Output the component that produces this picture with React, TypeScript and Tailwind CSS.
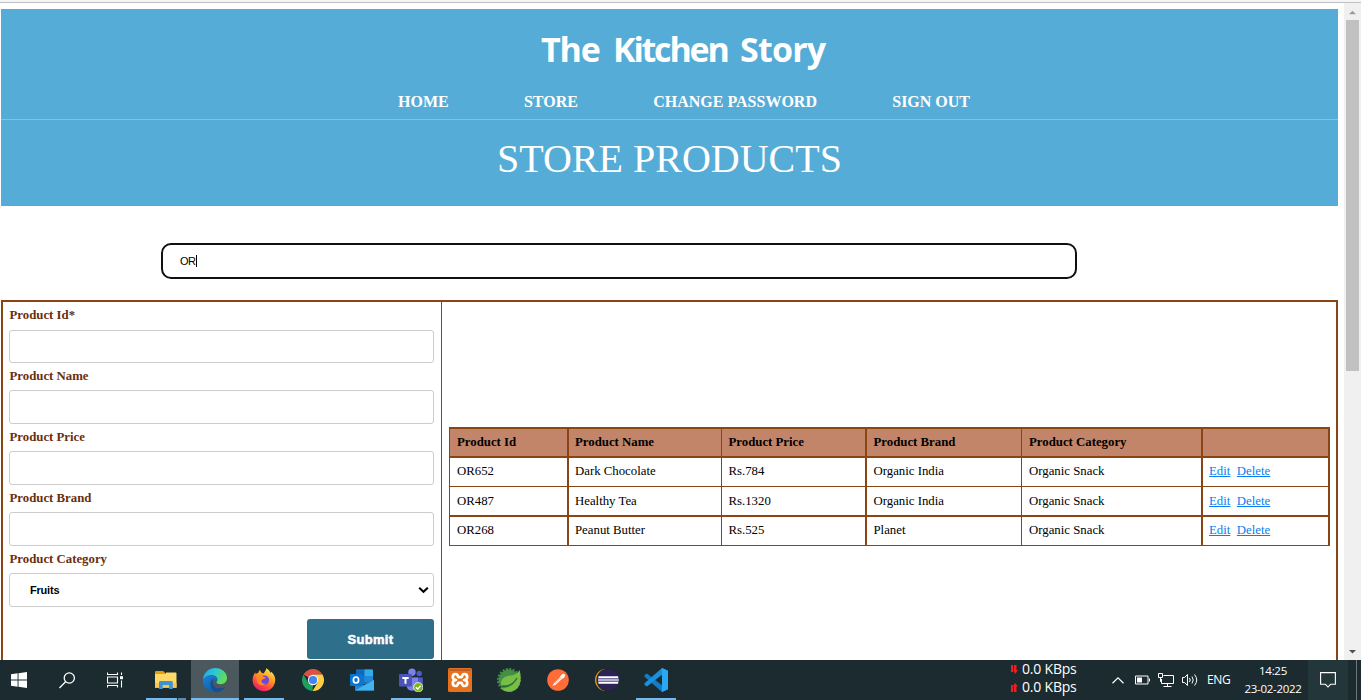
import type { ReactNode } from "react";

const SERIF = "font-['Liberation_Serif',serif]";

function Header() {
  return (
    <header className="h-[197px] w-full bg-[#55acd6] text-white">
      <div className="h-[110px] pt-4">
        <h1 className="flex h-12 items-center gap-[14px] pl-[540px] font-['Comic_Sans_MS','Open_Sans',sans-serif] text-[34px] font-bold leading-none">
          <span className="w-[58px] tracking-[-1.2px]">The</span>
          <span className="w-[113px] tracking-[-2.2px]">Kitchen</span>
          <span className="tracking-[-0.8px]">Story</span>
        </h1>
        <nav className="flex gap-[75.3px] pl-[397px] pt-5 text-base font-bold leading-[18px]">
          <a>HOME</a>
          <a>STORE</a>
          <a>CHANGE PASSWORD</a>
          <a>SIGN OUT</a>
        </nav>
      </div>
      <div className="h-px w-full bg-[#7fc4e6]" />
      <h2 className="pl-[496px] pt-4 text-[40px] leading-[46px]">STORE PRODUCTS</h2>
    </header>
  );
}

function Field({ label, labelClass, boxClass }: { label: string; labelClass: string; boxClass: string }) {
  return (
    <div>
      <label className={`block pl-[0.5px] text-[12.8px] font-bold text-[#6b2e0c] ${labelClass}`}>{label}</label>
      <div className={`w-[425px] rounded-[3px] border border-[#ccc] bg-white ${boxClass}`} />
    </div>
  );
}

function ProductForm() {
  return (
    <form className="h-[360px] w-[438px] shrink-0 pl-[6px]">
      <Field label="Product Id*" labelClass="h-7 leading-[26px]" boxClass="h-[33px]" />
      <Field label="Product Name" labelClass="h-[27px] leading-[26px]" boxClass="h-[34px]" />
      <Field label="Product Price" labelClass="h-[27px] leading-[26px]" boxClass="h-[34px]" />
      <Field label="Product Brand" labelClass="h-[27px] leading-[26px]" boxClass="h-[34px]" />
      <label className="block h-[27px] pl-[0.5px] text-[12.8px] font-bold leading-[26px] text-[#6b2e0c]">
        Product Category
      </label>
      <div className="flex h-[34px] w-[425px] items-center justify-between rounded-[3px] border border-[#ccc] pl-5 pr-[4px] font-['Liberation_Sans',sans-serif] text-[11px] font-bold tracking-[-0.2px] text-black">
        <span>Fruits</span>
        <svg width="11" height="8" viewBox="0 0 11 8" fill="none" stroke="#000" strokeWidth="2">
          <path d="M1.2 1.7 5.5 5.8 9.8 1.7" />
        </svg>
      </div>
      <div className="flex w-[425px] justify-end pt-3">
        <div className="flex h-10 w-[127px] items-center justify-center rounded-[3px] bg-[#2e6f8b] pt-0.5 font-['Liberation_Sans',sans-serif] text-[13px] font-black tracking-[0.3px] text-white [-webkit-text-stroke:0.5px_white]">
          Submit
        </div>
      </div>
    </form>
  );
}

const rows = [
  ["OR652", "Dark Chocolate", "Rs.784", "Organic India"],
  ["OR487", "Healthy Tea", "Rs.1320", "Organic India"],
  ["OR268", "Peanut Butter", "Rs.525", "Planet"],
];
const rowStyle = ["h-[29px] border-b pb-[3px]", "h-[30px] border-b-2 pb-px", "h-[29px] border-b pb-[3px]"];
const cellStyle = [
  "border-l pl-[7px]",
  "border-l-2 pl-[6px]",
  "border-l pl-[6.5px]",
  "border-l-2 pl-[6.5px]",
  "border-l pl-[7px]",
  "border-l-2 border-r-2 pl-[6px]",
];

function ProductTable() {
  return (
    <table className="w-[881px] table-fixed border-separate border-spacing-0 text-left text-[12.8px] leading-4 text-black">
      <colgroup>
        <col className="w-[118px]" />
        <col className="w-[154px]" />
        <col className="w-[144px]" />
        <col className="w-[156px]" />
        <col className="w-[180px]" />
        <col className="w-[129px]" />
      </colgroup>
      <thead>
        <tr className="bg-[#c38569]">
          {["Product Id", "Product Name", "Product Price", "Product Brand", "Product Category", ""].map((h, i) => (
            <th key={i} className={`h-[31px] border-y-2 border-[#8b4513] pt-0 pr-0 pb-px ${cellStyle[i]}`}>
              {h}
            </th>
          ))}
        </tr>
      </thead>
      <tbody>
        {rows.map((r, n) => (
          <tr key={n}>
            {[...r, "Organic Snack"].map((c, i) => (
              <td key={i} className={`border-[#8b4513] pt-0 pr-0 ${rowStyle[n]} ${cellStyle[i]}`}>
                {c}
              </td>
            ))}
            <td className={`border-[#8b4513] pt-0 pr-0 ${rowStyle[n]} ${cellStyle[5]}`}>
              <a className="mr-[6.5px] text-[#0a80f0] underline">Edit</a>
              <a className="text-[#0a80f0] underline">Delete</a>
            </td>
          </tr>
        ))}
      </tbody>
    </table>
  );
}

function Scrollbar() {
  return (
    <aside className="flex w-[17px] shrink-0 flex-col items-center bg-[#f0f0f0]">
      <svg className="mt-[6px] h-[11px] shrink-0" width="9" height="11" viewBox="0 0 9 11">
        <path d="M1 5.2 4.5 1.7 8 5.2z" fill="#9c9c9c" />
      </svg>
      <div className="h-[351px] w-[13px] bg-[#c1c1c1]" />
      <svg className="mb-[5px] mt-auto" width="9" height="6" viewBox="0 0 9 6">
        <path d="M1 1 4.5 4.6 8 1z" fill="#505050" />
      </svg>
    </aside>
  );
}

function TaskButton({ children, line = "", active = false }: { children: ReactNode; line?: string; active?: boolean }) {
  return (
    <div className={`flex h-10 w-12 shrink-0 flex-col items-center ${active ? "bg-[#4b585d]" : ""}`}>
      <svg className="mt-2 shrink-0" width="24" height="24" viewBox="0 0 24 24">
        {children}
      </svg>
      <div className={`mt-auto h-[2px] ${line}`} />
    </div>
  );
}

function Taskbar() {
  return (
    <footer className="flex h-10 w-full shrink-0 bg-[#1b2b30] font-['Open_Sans',sans-serif] text-white">
      <div className="flex h-10 w-[142px] shrink-0 items-center pl-[11px]">
        <svg width="16" height="16" viewBox="0 0 16 16" fill="#fff">
          <path d="M0 2.3 6.6 1.3V7.5H0zM7.5 1.2 16 0V7.5H7.5zM0 8.4H6.6V14.7L0 13.7zM7.5 8.4H16V16L7.5 14.8z" />
        </svg>
        <svg className="ml-8" width="17" height="17" viewBox="0 0 17 17" fill="none" stroke="#fff" strokeWidth="1.3">
          <circle cx="10.3" cy="6" r="5.1" />
          <path d="M6.6 9.8.4 16" />
        </svg>
        <svg className="ml-[31px]" width="16" height="16" viewBox="0 0 16 16" fill="none" stroke="#fff" strokeWidth="1.1">
          <path d="M.5.5V2.5H10.5V.5M.5 15.5V13.5H10.5V15.5M.5 5H10.5V11H.5zM14.5.5V3M14.5 8.5V15.5" />
          <path d="M13 4.2H16V7.2H13z" fill="#fff" stroke="none" />
        </svg>
      </div>
      <div className="flex gap-px">
        <TaskButton line="w-10 bg-[linear-gradient(to_right,#76b9ed_31px,#1b2b30_31px,#1b2b30_32px,#5b89b0_32px)]">
          <path d="M1 4.2Q1 3 2 3H9.2L11 4.8V8H1z" fill="#e59f0a" />
          <path d="M1 6H11L12.2 4.4H21.5Q22.5 4.4 22.5 5.4V19.7H1z" fill="#ffd867" />
          <path d="M1 15H22.5V19.7H1z" fill="#f8c64a" />
          <path d="M5 21V14.3Q5 13 6.3 13H17.5Q18.8 13 18.8 14.3V21H15.1V17H8.7V21z" fill="#3d93d6" />
        </TaskButton>
        <TaskButton active line="w-12 bg-[#76b9ed]">
          <defs>
            <linearGradient id="edgeTop" x1="0" y1="0" x2="1" y2=".4">
              <stop offset="0" stopColor="#269fe2" />
              <stop offset=".5" stopColor="#2cc6d6" />
              <stop offset="1" stopColor="#62dd58" />
            </linearGradient>
            <linearGradient id="edgeBody" x1="0" y1="0" x2="1" y2="1">
              <stop offset="0" stopColor="#1985d8" />
              <stop offset="1" stopColor="#0d4f9c" />
            </linearGradient>
          </defs>
          <path d="M0 12C0 5 5.4 0 12 0 19 0 24 4.8 24 10c0 3.7-2.8 6.2-6.3 6.2-2.8 0-4.3-1-4.3-1.9 0-.6 1-.9 1-2.7C14.4 9 12 7.2 8.6 7.2 4.3 7.2.8 9.8 0 12z" fill="url(#edgeTop)" />
          <path d="M0 13.2C.2 9.7 4 7.2 8.4 7.2c3.6 0 6 1.9 6 4.4 0 1.6-.9 2.2-1 2.7-1.2-2.6-2.3-3.4-3.1-3.4-1.7 1-2.4 3-2.1 5.2.5 3.7 4 6 7.5 6 2.1 0 4.4-.9 5.8-2-1.7 2.5-5.1 3.9-9.3 3.9C5.5 24 0 19.3 0 13.2z" fill="url(#edgeBody)" />
          <path d="M9.8 10.9c-4.2 3.2-2.5 9.8 2.4 13 3.7.2 7.5-1.3 9.5-4.2.2-.4-.2-.8-.7-.5-5.3 2.8-11.6.1-11.4-5.5 0-1.3.2-2 .7-2.8z" fill="#174f92" />
        </TaskButton>
        <TaskButton line="w-10 bg-[#76b9ed]">
          <defs>
            <linearGradient id="fox" x1=".8" y1="0" x2=".25" y2="1">
              <stop offset="0" stopColor="#fff04a" />
              <stop offset=".4" stopColor="#ff9a21" />
              <stop offset=".7" stopColor="#ff4b42" />
              <stop offset="1" stopColor="#e51673" />
            </linearGradient>
          </defs>
          <path d="M14.3.2C16.6 1.6 18 3.4 18.6 5L19.2 3.8C22 6.3 23.4 9 23.2 12.5 22.8 18.8 18 23.2 12 23.2 5.6 23.2.7 18.5.6 12.2.5 8.5 2.2 5.5 3.5 4.2V6.1C4.6 5.2 5.4 4.9 6.2 4.9 6.4 3.7 7.2 2.6 8.2 2 8.3 3.9 9.6 5 11.6 5.4 12.8 3.9 14 2.1 14.3.2z" fill="url(#fox)" />
          <circle cx="12.4" cy="12.1" r="4.7" fill="#7148cf" />
          <path d="M4 7.5C6.8 6 10.2 6.9 11.8 9L14 9.5C12.8 11.2 10.7 10.7 9.7 12.2 8.8 14.4 11 16.5 13.8 15.5 9.8 19.5 4.7 16 4.8 11z" fill="#ff8a22" />
        </TaskButton>
        <TaskButton>
          <path d="M12 12 2.5 6.5A11 11 0 0 1 21.5 6.5H12z" fill="#dd5145" />
          <path d="M2.5 6.5 7.2 14.7 12 17 11.5 23A11 11 0 0 1 2.5 6.5z" fill="#1d9f5f" />
          <path d="M12 6.5H21.5A11 11 0 0 1 11.5 23L16.6 14.7z" fill="#ffcd43" />
          <circle cx="12" cy="12" r="5.2" fill="#f1f5f8" />
          <circle cx="12" cy="12" r="4.1" fill="#4284f3" />
        </TaskButton>
        <TaskButton>
          <path d="M6 2.5Q6 1.5 7 1.5H22Q23 1.5 23 2.5V16H6z" fill="#1476c8" />
          <path d="M6 2.5H14.5V8H6z" fill="#1067b6" />
          <path d="M14.5 1.5H22Q23 1.5 23 2.5V8H14.5z" fill="#31aceb" />
          <path d="M14.5 8H23V14H14.5z" fill="#2588d6" />
          <path d="M5 12 14 17 24 12V22.5H5z" fill="#1a8ada" />
          <path d="M5 22.5 24 12V22.5z" fill="#43b3ed" />
          <rect y="6" width="12" height="12" rx="1" fill="#0875d1" />
          <ellipse cx="6" cy="12" rx="2.6" ry="3" fill="none" stroke="#fff" strokeWidth="1.7" />
        </TaskButton>
        <TaskButton line="w-10 bg-[#76b9ed]">
          <circle cx="20.2" cy="5.5" r="2.7" fill="#5059c9" />
          <path d="M15 9.5H23.8V16Q23.8 20 20 20H15z" fill="#5059c9" />
          <circle cx="13" cy="4.2" r="3.7" fill="#7b83eb" />
          <path d="M7.5 9.5H19V17Q19 22.7 13.2 22.7 7.5 22.7 7.5 17z" fill="#7b83eb" />
          <rect x="0" y="6" width="13" height="12.5" rx="1" fill="#4b53bc" />
          <path d="M3.3 9H9.7V10.9H7.5V15.8H5.5V10.9H3.3z" fill="#fff" />
          <circle cx="19.3" cy="19.3" r="4.7" fill="#7cb518" stroke="#fff" strokeWidth=".8" />
          <path d="M16.9 19.3 18.7 21.1 21.7 17.6" fill="none" stroke="#fff" strokeWidth="1.4" />
        </TaskButton>
        <TaskButton>
          <rect width="24" height="24" rx="1.5" fill="#e8721c" />
          <rect x="1" y="1" width="22" height="2" fill="#bd622c" />
          <path
            d="M8 12Q4.8 11.8 4.8 9 4.8 6 7.6 6 9.4 6 9.8 8L10.4 9.2H13.6L14.2 8Q14.6 6 16.4 6 19.2 6 19.2 9 19.2 11.8 16 12 19.2 12.2 19.2 15 19.2 18 16.4 18 14.6 18 14.2 16L13.6 14.8H10.4L9.8 16Q9.4 18 7.6 18 4.8 18 4.8 15 4.8 12.2 8 12z"
            fill="none"
            stroke="#fff"
            strokeWidth="2.7"
            strokeLinejoin="round"
          />
        </TaskButton>
        <TaskButton>
          <circle cx="12" cy="12" r="10.4" fill="#438f45" />
          <circle cx="12" cy="12" r="11" fill="none" stroke="#438f45" strokeWidth="2" strokeDasharray="2 1.45" />
          <path d="M22.5 2C24.5 8 24.5 18 18 22 13 25.2 7 24 3.3 20 8 21 14 19 18 14 13.5 17.5 8.5 18 4.2 17.2 3 11.5 7 8.2 13.5 7.5 18 7 20.7 5.3 22.5 2z" fill="#79bd45" />
          <path d="M5 18.2C12 18.7 17 15.5 20 10" fill="none" stroke="#236c38" strokeWidth="1.3" />
        </TaskButton>
        <TaskButton>
          <circle cx="12" cy="12" r="10.8" fill="#ff6c37" />
          <path d="M6.2 18.2 8.5 14.8 13.8 9.5 15.5 11.2 10.2 16.3z" fill="#fff" />
          <path d="M13.6 9.3 15 7.3Q17.4 4.9 19 6.4 19.8 8.2 17.7 10L15.5 11.2z" fill="#fff3ec" />
          <path d="M9 15.3 14.5 10.2" stroke="#ff6c37" strokeWidth=".5" />
        </TaskButton>
        <TaskButton>
          <circle cx="11" cy="12" r="11" fill="#f7941e" />
          <circle cx="12.6" cy="12" r="11.2" fill="#1b2b30" />
          <circle cx="13.3" cy="12" r="10.5" fill="#2c2255" />
          <path d="M3.4 8.3H23.2V10H3.4zM3 11.2H23.8V12.8H3zM3.4 14H23.2V15.7H3.4z" fill="#fff" />
          <path d="M3 10H23.7V11.2H3zM3 12.8H23.7V14H3z" fill="#7770a7" />
        </TaskButton>
        <TaskButton line="w-10 bg-[#76b9ed]">
          <path d="M18 0 24 2.8V21.2L18 24 0.8 8.9Q-.1 8 .8 7.1L2 6Q2.8 5.4 3.6 6L18 17.2z" fill="#147bc4" />
          <path d="M18 0 .8 15.1Q-.1 16 .8 16.9L2 18Q2.8 18.6 3.6 18L18 6.8z" fill="#1991dc" />
          <path d="M18 0 24 2.8V21.2L18 24z" fill="#2ca7f3" />
        </TaskButton>
      </div>
      <div className="ml-auto flex h-10 items-center">
        <div className="mb-1 flex w-[99px] flex-col text-[14px] leading-[18px] tracking-[-0.2px]">
          <div className="flex items-center gap-1">
            <svg width="7" height="9" viewBox="0 0 7 9" fill="#f21d1d">
              <path d="M0 0H2V7H0zM3 0H5.5V5H7L4.2 9 2 5H3z" />
            </svg>
            0.0 KBps
          </div>
          <div className="flex items-center gap-1">
            <svg width="7" height="9" viewBox="0 0 7 9" fill="#f21d1d">
              <path d="M0 2H2V9H0zM3 9H5.5V3.5H7L4.2 0 1.5 3.5H3z" />
            </svg>
            0.0 KBps
          </div>
        </div>
        <svg className="ml-[2px]" width="12" height="7" viewBox="0 0 12 7" fill="none" stroke="#fff" strokeWidth="1.2">
          <path d="M.5 6.3 6 .9 11.5 6.3" />
        </svg>
        <svg className="ml-[11px]" width="15" height="10" viewBox="0 0 15 10" fill="none" stroke="#fff">
          <path d="M.5 1H13V9H.5zM14.5 3.5V6.5" />
          <path d="M2 2.5H7V7.5H2z" fill="#fff" stroke="none" />
        </svg>
        <svg className="ml-2" width="16" height="14" viewBox="0 0 16 14" fill="none" stroke="#fff">
          <path d="M5.5 2.5H15.5V10.5H3.5V6M9.5 10.5V13.5M5.5 13.5H13.5M.5.5H4.5V4.5H.5zM2.5 4.5V8.5H3.5" />
        </svg>
        <svg className="ml-2" width="16" height="14" viewBox="0 0 16 14" fill="none" stroke="#fff">
          <path d="M.5 4.5H2.5L5.5 1.5V12.5L2.5 9.5H.5zM7.5 5Q9 7 7.5 9M10 3.5Q12.5 7 10 10.5M12.5 1.5Q17 7 12.5 12.5" />
        </svg>
        <span className="ml-[9px] w-9 text-[12px] tracking-[-0.4px]">ENG</span>
        <div className="w-[60px] whitespace-nowrap text-center text-[11.5px] leading-[18px] tracking-[-0.3px]">
          <div>14:25</div>
          <div>23-02-2022</div>
        </div>
        <div className="ml-[5px] flex h-10 w-10 items-center justify-center bg-[#23363a]">
          <svg width="16" height="16" viewBox="0 0 16 16" fill="none" stroke="#fff" strokeWidth="1.1">
            <path d="M.6.6H15.4V12.3H10.5L8 15 5.5 12.3H.6z" />
          </svg>
        </div>
        <div className="ml-2 mr-1 h-10 w-px bg-[#6c777a]" />
      </div>
    </footer>
  );
}

export default function App() {
  return (
    <div className={`flex h-[700px] w-[1361px] flex-col overflow-hidden bg-white ${SERIF}`}>
      <div className="h-[3px] w-full shrink-0 border-b border-[#c0c0c0] bg-[#f5f5f5]" />
      <div className="flex h-[657px] shrink-0">
        <main className="mr-[6px] flex w-[1338px] flex-col overflow-hidden pl-px pt-[6px]">
          <Header />
          <div className="ml-40 mt-[37px] flex h-9 w-[916px] shrink-0 items-center rounded-[10px] border-2 border-[#111] pl-[17px] font-['Liberation_Sans',sans-serif] text-[11px] tracking-[-0.5px] text-black">
            OR
            <span className="h-3 w-px bg-black" />
          </div>
          <div className="mt-[21px] flex h-[360px] shrink-0 border-2 border-b-0 border-[#8b4513]">
            <ProductForm />
            <div className="flex-1 border-l border-[#8b4513] pl-[7px] pt-[125px]">
              <ProductTable />
            </div>
          </div>
        </main>
        <Scrollbar />
      </div>
      <Taskbar />
    </div>
  );
}
